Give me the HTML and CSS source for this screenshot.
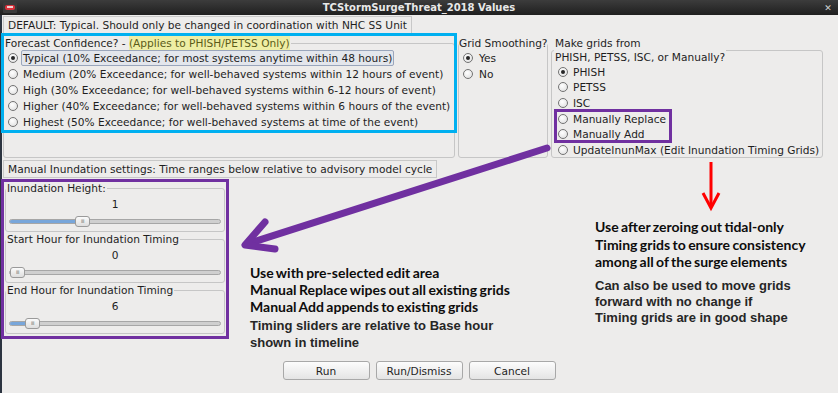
FILE: index.html
```html
<!DOCTYPE html>
<html lang="en">
<head>
  <meta charset="UTF-8" />
  <title>TCStormSurgeThreat_2018 Values</title>
  <link rel="stylesheet" href="styles.css">
</head>
<body>
  <div class="window">
    <div class="titlebar">
      <svg class="app-icon" width="14" height="11" viewBox="0 0 14 11">
        <rect x="0" y="0" width="14" height="11" rx="1" fill="#3a3a3a"/>
        <rect x="2" y="3" width="10" height="5" rx="2" fill="#d8303a"/>
        <rect x="4" y="4" width="6" height="2" fill="#f0d0d0"/>
      </svg>
      <span class="title">TCStormSurgeThreat_2018 Values</span>
      <span class="close">&#x2715;</span>
    </div>

    <div class="content">
      <div class="label-box">DEFAULT: Typical. Should only be changed in coordination with NHC SS Unit</div>

      <div class="top-row">
        <fieldset class="group confidence">
          <legend>Forecast Confidence? - <mark>(Applies to PHISH/PETSS Only)</mark></legend>
          <div class="radio"><span class="dot on"></span><span class="txt focus">Typical (10% Exceedance; for most systems anytime within 48 hours)</span></div>
          <div class="radio"><span class="dot"></span><span class="txt">Medium (20% Exceedance; for well-behaved systems within 12 hours of event)</span></div>
          <div class="radio"><span class="dot"></span><span class="txt">High (30% Exceedance; for well-behaved systems within 6-12 hours of event)</span></div>
          <div class="radio"><span class="dot"></span><span class="txt">Higher (40% Exceedance; for well-behaved systems within 6 hours of the event)</span></div>
          <div class="radio"><span class="dot"></span><span class="txt">Highest (50% Exceedance; for well-behaved systems at time of the event)</span></div>
        </fieldset>

        <fieldset class="group smoothing">
          <legend>Grid Smoothing?</legend>
          <div class="radio"><span class="dot on"></span><span class="txt">Yes</span></div>
          <div class="radio"><span class="dot"></span><span class="txt">No</span></div>
        </fieldset>

        <fieldset class="group source">
          <legend>Make grids from<br>PHISH, PETSS, ISC, or Manually?</legend>
          <div class="radio"><span class="dot on"></span><span class="txt">PHISH</span></div>
          <div class="radio"><span class="dot"></span><span class="txt">PETSS</span></div>
          <div class="radio"><span class="dot"></span><span class="txt">ISC</span></div>
          <div class="radio"><span class="dot"></span><span class="txt">Manually Replace</span></div>
          <div class="radio"><span class="dot"></span><span class="txt">Manually Add</span></div>
          <div class="radio"><span class="dot"></span><span class="txt">UpdateInunMax (Edit Inundation Timing Grids)</span></div>
        </fieldset>
      </div>

      <div class="label-box manual">Manual Inundation settings: Time ranges below relative to advisory model cycle</div>

      <div class="lower">
        <div class="sliders">
          <fieldset class="group slider-group">
            <legend>Inundation Height:</legend>
            <div class="value">1</div>
            <div class="track">
              <div class="fill" style="width: 71px"></div>
              <div class="thumb" style="left: 65px">III</div>
            </div>
          </fieldset>
          <fieldset class="group slider-group">
            <legend>Start Hour for Inundation Timing</legend>
            <div class="value">0</div>
            <div class="track">
              <div class="fill" style="width: 0px"></div>
              <div class="thumb" style="left: 0px">III</div>
            </div>
          </fieldset>
          <fieldset class="group slider-group">
            <legend>End Hour for Inundation Timing</legend>
            <div class="value">6</div>
            <div class="track">
              <div class="fill" style="width: 20px"></div>
              <div class="thumb" style="left: 15px">III</div>
            </div>
          </fieldset>
        </div>

        <div class="note note-left">
          <div class="callout">
            <div>Use with pre-selected edit area</div>
            <div>Manual Replace wipes out all existing grids</div>
            <div>Manual Add appends to existing grids</div>
          </div>
          <div class="plain">
            <div>Timing sliders are relative to Base hour</div>
            <div>shown in timeline</div>
          </div>
        </div>

        <div class="note note-right">
          <div class="callout wide">
            <div>Use after zeroing out tidal-only</div>
            <div>Timing grids to ensure consistency</div>
            <div>among all of the surge elements</div>
          </div>
          <div class="plain tight">
            <div>Can also be used to move grids</div>
            <div>forward with no change if</div>
            <div>Timing grids are in good shape</div>
          </div>
        </div>
      </div>

      <div class="buttons">
        <button>Run</button>
        <button>Run/Dismiss</button>
        <button>Cancel</button>
      </div>
    </div>

    <!-- annotations drawn over the dialog -->
    <div class="box blue"></div>
    <div class="box purple sliders-box"></div>
    <div class="box purple manual-box"></div>
    <svg class="arrows" width="838" height="393">
      <g fill="none" stroke="#7030a0" stroke-width="7" stroke-linecap="round" stroke-linejoin="round">
        <line x1="547" y1="148" x2="250" y2="243"/>
        <polyline points="265,222 245,245 275,249"/>
      </g>
      <g fill="none" stroke="#ff0000" stroke-width="3" stroke-linejoin="miter">
        <line x1="711" y1="162" x2="711" y2="207"/>
        <polyline points="703,193 711,208 719,193"/>
      </g>
    </svg>
  </div>
</body>
</html>
```

FILE: styles.css
```css
* {
  box-sizing: border-box;
}

body {
  margin: 0;
  background: #edeceb;
  font-family: "DejaVu Sans", sans-serif;
  font-size: 10.6px;
  color: #1e1e1e;
}

.window {
  position: relative;
  width: 838px;
  height: 393px;
  background: #edeceb;
  overflow: hidden;
}

.titlebar {
  height: 15px;
  display: grid;
  grid-template-columns: 20px 1fr 20px;
  align-items: center;
  background: linear-gradient(#3c3c3c, #1f1f1f);
  color: #e8e8e8;
  font-weight: bold;
  font-size: 10px;
}

.app-icon {
  margin-left: 3px;
}

.title {
  text-align: center;
}

.close {
  font-size: 9px;
  color: #d0d0d0;
  text-align: center;
}

.content {
  height: 378px;
  border-left: 2px solid #2c3440;
  padding: 1px 15px 0 1px;
}

.label-box {
  width: max-content;
  height: 18px;
  line-height: 16px;
  padding: 0 4px;
  border: 1px solid #c8c8c8;
}

.label-box.manual {
  margin-top: 2px;
}

.top-row {
  display: flex;
  gap: 3px;
  margin-top: 3px;
  height: 121px;
}

.group {
  margin: 0;
  padding: 0;
  border: 1px solid #c6c6c6;
  border-radius: 3px;
  min-width: 0;
}

.group legend {
  margin-left: 0;
  padding: 0 1px;
  line-height: 13px;
  white-space: nowrap;
}

.confidence {
  width: 452px;
}

.smoothing {
  width: 90px;
}

.smoothing legend {
  padding: 0;
}

.source {
  width: 272px;
}

.source legend {
  margin-left: 2px;
  line-height: 13.5px;
}

mark {
  background: #eeeea4;
  color: #5b5b18;
  padding: 1px 0 2px;
}

.radio {
  height: 16px;
  display: flex;
  align-items: center;
  padding-left: 4px;
  white-space: nowrap;
}

.source .radio {
  height: 15.6px;
  padding-left: 6px;
}

.dot {
  width: 10px;
  height: 10px;
  border: 1px solid #737373;
  border-radius: 50%;
  background: radial-gradient(circle at 40% 35%, #ffffff, #dcdcdc);
  display: flex;
  align-items: center;
  justify-content: center;
  flex-shrink: 0;
}

.dot.on::after {
  content: "";
  width: 4px;
  height: 4px;
  border-radius: 50%;
  background: #262626;
}

.txt {
  margin-left: 3px;
  padding: 0 1px;
  line-height: 14px;
  border: 1px solid transparent;
  border-radius: 2px;
}

.txt.focus {
  background: #e3e6ec;
  border-color: #9aa6bc;
}

.smoothing .txt {
  margin-left: 4px;
}

.lower {
  display: flex;
  height: 177px;
  margin-top: 2px;
}

.sliders {
  width: 220px;
  margin-left: 2px;
  padding-top: 1px;
  flex-shrink: 0;
}

.slider-group {
  height: 51px;
  padding: 0 0 3px;
}

.slider-group legend {
  line-height: 14px;
}

.value {
  height: 17px;
  padding-top: 1px;
  line-height: 17px;
  text-align: center;
}

.track {
  position: relative;
  height: 5px;
  margin: 7px 3px 0;
  border: 1px solid #a6a6a6;
  border-radius: 3px;
  background: #cfcfcf;
}

.fill {
  height: 100%;
  background: #78a6da;
  border-radius: 2px 0 0 2px;
}

.thumb {
  position: absolute;
  top: -4px;
  width: 15px;
  height: 11px;
  border: 1px solid #9a9a9a;
  border-radius: 3px;
  background: linear-gradient(#fbfbfb, #dedede);
  font-size: 5px;
  line-height: 9px;
  text-align: center;
  color: #777;
  letter-spacing: -0.5px;
}

.note {
  line-height: 17px;
}

.note-left {
  flex: 0 0 345px;
  margin-left: 25px;
  padding-top: 84px;
}

.note-right {
  padding-top: 38px;
}

.callout {
  font-family: Lato, "Liberation Sans", sans-serif;
  font-weight: bold;
  font-size: 14px;
  color: #0d0d0d;
  word-spacing: -1px;
}

.callout.wide {
  line-height: 17.5px;
}

.plain {
  margin-top: 2px;
  font-family: "Liberation Sans", Arial, sans-serif;
  font-weight: bold;
  font-size: 13px;
  color: #262626;
}

.plain.tight {
  margin-top: 7px;
  line-height: 16px;
}

.buttons {
  display: flex;
  justify-content: center;
  gap: 6px;
  margin-top: 4px;
  padding-left: 12px;
}

button {
  width: 87px;
  height: 19px;
  padding: 0;
  font-family: "DejaVu Sans", sans-serif;
  font-size: 10.6px;
  color: #1e1e1e;
  border: 1px solid #a8a8a8;
  border-radius: 3px;
  background: linear-gradient(#fcfcfc, #e4e4e4);
}

.box {
  position: absolute;
  border: 3px solid;
}

.blue {
  left: 1px;
  top: 33px;
  width: 456px;
  height: 100px;
  border-color: #00b0f0;
}

.purple {
  border-color: #7030a0;
}

.sliders-box {
  left: 1px;
  top: 179px;
  width: 228px;
  height: 160px;
}

.manual-box {
  left: 554px;
  top: 109px;
  width: 118px;
  height: 34px;
}

.arrows {
  position: absolute;
  left: 0;
  top: 0;
  pointer-events: none;
}
```
